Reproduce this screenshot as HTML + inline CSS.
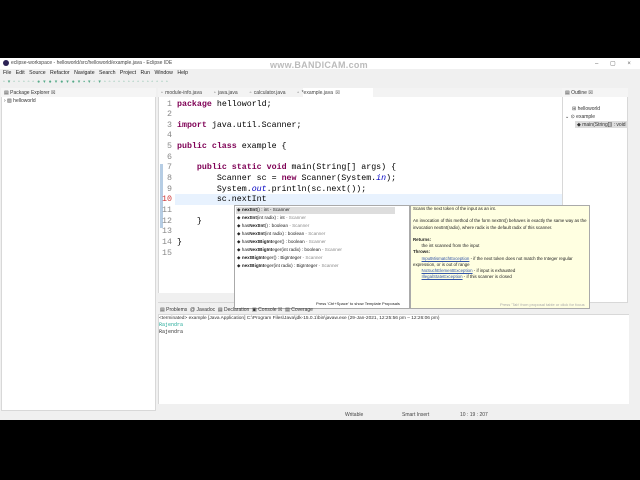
<!DOCTYPE html><html><head><style>
*{margin:0;padding:0;box-sizing:border-box}
body{width:640px;height:480px;background:#000;position:relative;overflow:hidden;font-family:"Liberation Sans",sans-serif;font-size:5px;color:#333}
.a{position:absolute}
.code{font-family:"Liberation Mono",monospace;font-size:8.3px;color:#000;white-space:pre;line-height:10.65px}
.k{color:#7f0055;font-weight:bold}
.ln{color:#888;text-align:right;width:14px}
.pp{font-size:4.6px;color:#222;white-space:nowrap;line-height:8px}
.g{color:#888}
</style></head><body>
<div class="a" style="left:0;top:58px;width:640px;height:362px;background:#f0f0f0"></div>
<div class="a" style="left:0;top:58px;width:640px;height:11px;background:#fff"></div>
<div class="a" style="left:3px;top:60px;width:6px;height:6px;border-radius:50%;background:#2c2255"></div>
<div class="a" style="left:11px;top:60px;font-size:5px;color:#444">eclipse-workspace - helloworld/src/helloworld/example.java - Eclipse IDE</div>
<div class="a" style="left:270px;top:60px;font-size:9px;font-weight:bold;color:#bbb;letter-spacing:0.3px">www.BANDICAM.com</div>
<div class="a" style="left:595px;top:60px;font-size:6px;color:#666;word-spacing:10px">– ▢ ×</div>
<div class="a" style="left:3px;top:70px;font-size:5.2px;color:#222;word-spacing:3px">File Edit Source Refactor Navigate Search Project Run Window Help</div>
<div class="a" style="left:3px;top:79px;font-size:5px;color:#5a8;letter-spacing:3px">▫▾▫▫▫▫▫●▾●▾●▾●▾▪▾▫▾▫▫▫▫▫▫▫▫▫▫▫▫▫▫</div>
<div class="a" style="left:1px;top:88px;width:155px;height:323px;background:#fff;border:1px solid #d8d8d8"></div>
<div class="a" style="left:1px;top:88px;width:155px;height:9px;background:#f5f5f5"></div>
<div class="a" style="left:4px;top:90px;font-size:5px">▤ Package Explorer ☒</div>
<div class="a" style="left:4px;top:98px;font-size:5px">› ▧ helloworld</div>
<div class="a" style="left:158px;top:88px;width:405px;height:215px;background:#fff;border:1px solid #d8d8d8"></div>
<div class="a" style="left:158px;top:88px;width:405px;height:9px;background:#f3f3f3"></div>
<div class="a" style="left:303px;top:88px;width:70px;height:9px;background:#fff"></div>
<div class="a" style="left:161px;top:90px;font-size:5px;color:#444;word-spacing:1px">▫ module-info.java &nbsp;&nbsp;&nbsp; ▫ java.java &nbsp;&nbsp;&nbsp; ▫ calculator.java &nbsp;&nbsp;&nbsp; ▫ *example.java ☒</div>
<div class="a" style="left:158px;top:293px;width:405px;height:9px;background:#f0f0f0"></div>
<div class="a" style="left:175px;top:194px;width:415px;height:11px;background:#e8f2fe"></div>
<div class="a" style="left:160px;top:164px;width:3px;height:64px;background:#b6cde4"></div>
<div class="a ln code" style="left:158px;top:99.5px">1
2
3
4
5
6
7
8
9
<span style="color:#c33">10</span>
11
12
13
14
15</div>
<div class="a code" style="left:177px;top:99.5px"><span class="k">package</span> helloworld;

<span class="k">import</span> java.util.Scanner;

<span class="k">public class</span> example {

    <span class="k">public static void</span> main(String[] args) {
        Scanner sc = <span class="k">new</span> Scanner(System.<i style="color:#0000c0">in</i>);
        System.<i style="color:#0000c0">out</i>.println(sc.next());
        sc.nextInt

    }

}
</div>
<div class="a" style="left:562px;top:88px;width:66px;height:215px;background:#fff;border:1px solid #d8d8d8"></div>
<div class="a" style="left:562px;top:88px;width:66px;height:9px;background:#f5f5f5"></div>
<div class="a" style="left:565px;top:90px;font-size:5px">▤ Outline ☒</div>
<div class="a" style="left:572px;top:106px;font-size:5px">⊞ helloworld</div>
<div class="a" style="left:565px;top:114px;font-size:5px">⌄ ⊙ example</div>
<div class="a" style="left:575px;top:121px;width:53px;height:7px;background:#ddd"></div>
<div class="a" style="left:577px;top:122px;font-size:5px">◆ main(String[]) : void</div>
<div class="a" style="left:234px;top:205px;width:176px;height:104px;background:#fff;border:1px solid #aaa"></div>
<div class="a" style="left:236px;top:207px;width:159px;height:7px;background:#ddd"></div>
<div class="a pp" style="left:237px;top:206px">◆ <b>nextInt</b>() : int - Scanner<br>◆ <b>nextInt</b>(int radix) : int <span class="g">- Scanner</span><br>◆ has<b>NextInt</b>() : boolean <span class="g">- Scanner</span><br>◆ has<b>NextInt</b>(int radix) : boolean <span class="g">- Scanner</span><br>◆ has<b>NextBigInt</b>eger() : boolean <span class="g">- Scanner</span><br>◆ has<b>NextBigInt</b>eger(int radix) : boolean <span class="g">- Scanner</span><br>◆ <b>nextBigInt</b>eger() : BigInteger <span class="g">- Scanner</span><br>◆ <b>nextBigInt</b>eger(int radix) : BigInteger <span class="g">- Scanner</span></div>
<div class="a pp" style="left:316px;top:300px;font-size:4px">Press 'Ctrl+Space' to show Template Proposals</div>
<div class="a" style="left:410px;top:205px;width:180px;height:104px;background:#ffffe1;border:1px solid #aaa"></div>
<div class="a" style="left:413px;top:206px;width:175px;font-size:4.4px;line-height:6.2px;color:#222">Scans the next token of the input as an int.<br><span style="line-height:3px"><br></span>An invocation of this method of the form nextInt() behaves in exactly the same way as the invocation nextInt(radix), where radix is the default radix of this scanner.<br><span style="line-height:3px"><br></span><b>Returns:</b><br>&nbsp;&nbsp;&nbsp;&nbsp;&nbsp;&nbsp;&nbsp;the int scanned from the input<br><b>Throws:</b><br>&nbsp;&nbsp;&nbsp;&nbsp;&nbsp;&nbsp;&nbsp;<u style="color:#35a">InputMismatchException</u> - if the next token does not match the Integer regular expression, or is out of range<br>&nbsp;&nbsp;&nbsp;&nbsp;&nbsp;&nbsp;&nbsp;<u style="color:#35a">NoSuchElementException</u> - if input is exhausted<br>&nbsp;&nbsp;&nbsp;&nbsp;&nbsp;&nbsp;&nbsp;<u style="color:#35a">IllegalStateException</u> - if this scanner is closed</div>
<div class="a" style="left:500px;top:302px;font-size:4px;color:#aaa">Press 'Tab' from proposal table or click for focus</div>
<div class="a" style="left:158px;top:314px;width:474px;height:97px;background:#fff;border:1px solid #d8d8d8"></div>
<div class="a" style="left:160px;top:307px;font-size:5px;color:#333">▤ Problems &nbsp;@ Javadoc &nbsp;▤ Declaration &nbsp;▣ Console ☒ &nbsp;▤ Coverage</div>
<div class="a" style="left:159px;top:316px;font-size:4.8px;color:#333">&lt;terminated&gt; example [Java Application] C:\Program Files\Java\jdk-15.0.1\bin\javaw.exe (29-Jan-2021, 12:25:56 pm – 12:26:06 pm)</div>
<div class="a" style="left:159px;top:322px;font-family:'Liberation Mono',monospace;font-size:5px;line-height:7px"><span style="color:#2a9">Rajendra</span><br>Rajendra</div>
<div class="a" style="left:158px;top:404px;width:474px;height:7px;background:#f0f0f0"></div>
<div class="a" style="left:629px;top:88px;width:11px;height:323px;background:#f0f0f0"></div>
<div class="a" style="left:345px;top:412px;font-size:5px;color:#444">Writable</div>
<div class="a" style="left:402px;top:412px;font-size:5px;color:#444">Smart Insert</div>
<div class="a" style="left:460px;top:412px;font-size:5px;color:#444">10 : 19 : 207</div>
<div class="a" style="left:0;top:420px;width:640px;height:60px;background:#000"></div>
</body></html>
